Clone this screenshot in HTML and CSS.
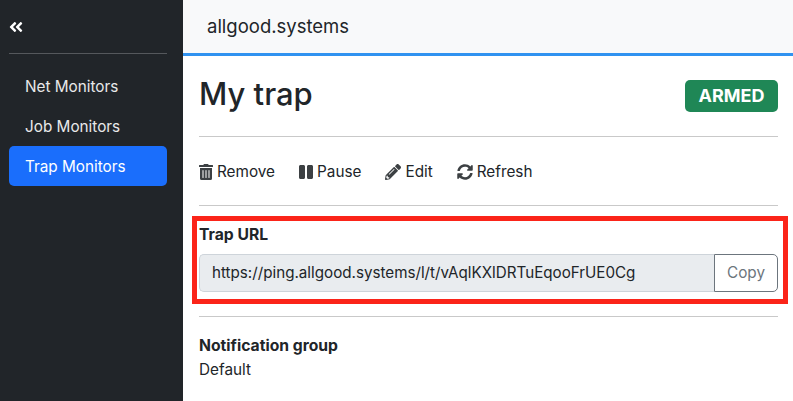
FILE: index.html
```html
<!DOCTYPE html>
<html lang="en">
<head>
  <meta charset="UTF-8" />
  <meta name="viewport" content="width=device-width, initial-scale=1.0"/>
  <title>My trap</title>
  <link rel="stylesheet" href="styles.css">
</head>
<body>
  <div class="app">
    <aside class="sidebar">
      <div class="sidebar-top">
        <svg class="collapse-icon" viewBox="0 0 448 512"><path d="M223.7 239l136-136c9.4-9.4 24.6-9.4 33.9 0l22.6 22.6c9.4 9.4 9.4 24.6 0 33.9L319.9 256l96.4 96.4c9.4 9.4 9.4 24.6 0 33.9L393.7 409c-9.4 9.4-24.6 9.4-33.9 0l-136-136c-9.5-9.4-9.5-24.6-.1-34zm-192 34l136 136c9.4 9.4 24.6 9.4 33.9 0l22.6-22.6c9.4-9.4 9.4-24.6 0-33.9L127.9 256l96.4-96.4c9.4-9.4 9.4-24.6 0-33.9L201.7 103c-9.4-9.4-24.6-9.4-33.9 0l-136 136c-9.5 9.4-9.5 24.6-.1 34z"/></svg>
      </div>
      <nav class="side-nav">
        <a class="nav-item">Net Monitors</a>
        <a class="nav-item">Job Monitors</a>
        <a class="nav-item active">Trap Monitors</a>
      </nav>
    </aside>

    <div class="main">
      <header class="topbar">allgood.systems</header>
      <div class="content">
        <div class="title-row">
          <h1>My trap</h1>
          <span class="badge">ARMED</span>
        </div>

        <div class="actions">
          <a class="action">
            <svg class="icon icon-narrow" viewBox="0 0 448 512"><path d="M32 464a48 48 0 0 0 48 48h288a48 48 0 0 0 48-48V128H32zm272-256a16 16 0 0 1 32 0v224a16 16 0 0 1-32 0zm-96 0a16 16 0 0 1 32 0v224a16 16 0 0 1-32 0zm-96 0a16 16 0 0 1 32 0v224a16 16 0 0 1-32 0zM432 32H312l-9.4-18.7A24 24 0 0 0 281.1 0H166.8a23.72 23.72 0 0 0-21.4 13.3L136 32H16A16 16 0 0 0 0 48v32a16 16 0 0 0 16 16h416a16 16 0 0 0 16-16V48a16 16 0 0 0-16-16z"/></svg>
            Remove
          </a>
          <a class="action">
            <svg class="icon icon-narrow" viewBox="0 0 448 512"><path d="M144 479H48c-26.5 0-48-21.5-48-48V79c0-26.5 21.5-48 48-48h96c26.5 0 48 21.5 48 48v352c0 26.5-21.5 48-48 48zm304-48V79c0-26.5-21.5-48-48-48h-96c-26.5 0-48 21.5-48 48v352c0 26.5 21.5 48 48 48h96c26.5 0 48-21.5 48-48z"/></svg>
            Pause
          </a>
          <a class="action">
            <svg class="icon" viewBox="0 0 512 512"><path d="M497.9 142.1l-46.1 46.1c-4.7 4.7-12.3 4.7-17 0l-111-111c-4.7-4.7-4.7-12.3 0-17l46.1-46.1c18.7-18.7 49.1-18.7 67.9 0l60.1 60.1c18.8 18.7 18.8 49.1 0 67.9zM284.2 99.8L21.6 362.4.4 483.9c-2.9 16.4 11.4 30.6 27.8 27.8l121.5-21.3 262.6-262.6c4.7-4.7 4.7-12.3 0-17l-111-111c-4.8-4.7-12.4-4.7-17.1 0zM124.1 339.9c-5.5-5.5-5.5-14.3 0-19.8l154-154c5.5-5.5 14.3-5.5 19.8 0s5.5 14.3 0 19.8l-154 154c-5.5 5.5-14.3 5.5-19.8 0zM88 424h48v36.3l-64.5 11.3-31.1-31.1L51.7 376H88v48z"/></svg>
            Edit
          </a>
          <a class="action">
            <svg class="icon" viewBox="0 0 512 512"><path d="M370.72 133.28C339.458 104.008 298.888 87.962 255.848 88c-77.458.068-144.328 53.178-162.791 126.85-1.344 5.363-6.122 9.15-11.651 9.15H24.103c-7.498 0-13.194-6.807-11.807-14.176C33.933 94.924 134.813 8 256 8c66.448 0 126.791 26.136 171.315 68.685L463.03 40.97C478.149 25.851 504 36.559 504 57.941V192c0 13.255-10.745 24-24 24H345.941c-21.382 0-32.09-25.851-16.971-40.971l41.75-41.749zM32 296h134.059c21.382 0 32.09 25.851 16.971 40.971l-41.75 41.75c31.262 29.273 71.835 45.319 114.876 45.28 77.418-.07 144.315-53.144 162.787-126.849 1.344-5.363 6.122-9.15 11.651-9.15h57.304c7.498 0 13.194 6.807 11.807 14.176C478.067 417.076 377.187 504 256 504c-66.448 0-126.791-26.136-171.315-68.685L48.97 471.03C33.851 486.149 8 475.441 8 454.059V320c0-13.255 10.745-24 24-24z"/></svg>
            Refresh
          </a>
        </div>

        <div class="field trap-field">
          <div class="field-label">Trap URL</div>
          <div class="input-group">
            <div class="url-value">https://ping.allgood.systems/l/t/vAqlKXlDRTuEqooFrUE0Cg</div>
            <button class="copy-btn">Copy</button>
          </div>
          <!-- annotation drawn over the screenshot -->
          <div class="highlight"></div>
        </div>

        <div class="field">
          <div class="field-label">Notification group</div>
          <div>Default</div>
        </div>
      </div>
    </div>
  </div>
</body>
</html>
```

FILE: styles.css
```css
html, body {
  margin: 0;
  height: 100%;
  overflow: hidden;
}

body {
  font-family: Inter, "Liberation Sans", sans-serif;
  font-size: 15.3px;
  line-height: 24px;
  color: #212529;
  background: #fff;
}

.app {
  display: flex;
  height: 401px;
}

/* sidebar */
.sidebar {
  width: 183px;
  flex: none;
  box-sizing: border-box;
  padding: 0 16px 0 9px;
  background: #212529;
}

.sidebar-top {
  height: 54px;
  box-sizing: border-box;
  display: flex;
  align-items: center;
  border-bottom: 1px solid #55585c;
}

.collapse-icon {
  width: 14px;
  height: 16px;
  fill: #fff;
}

.side-nav {
  display: flex;
  flex-direction: column;
  margin-top: 12px;
}

.nav-item {
  height: 40px;
  box-sizing: border-box;
  display: flex;
  align-items: center;
  padding: 2px 0 0 16px;
  color: #e9e9ea;
  border-radius: 5px;
}

.nav-item.active {
  background: #1a6efc;
  color: #fff;
}

/* main column */
.main {
  flex: 1;
  min-width: 0;
}

.topbar {
  height: 53px;
  box-sizing: border-box;
  display: flex;
  align-items: center;
  padding: 0 0 1px 24px;
  font-size: 18.5px;
  background: #f8f9fa;
}

.content {
  padding: 0 15px 0 16px;
  border-top: 3px solid #3092f0;
}

.title-row {
  height: 80px;
  display: flex;
  align-items: center;
  justify-content: space-between;
  border-bottom: 1px solid #c9c9c9;
}

h1 {
  margin: 0 0 4px;
  font-size: 31px;
  font-weight: 500;
  line-height: 38px;
}

.badge {
  width: 93px;
  height: 32px;
  display: flex;
  align-items: center;
  justify-content: center;
  font-size: 18px;
  font-weight: 700;
  color: #fff;
  background: #1f8756;
  border-radius: 5px;
}

.actions {
  height: 69px;
  box-sizing: border-box;
  padding-top: 2px;
  display: flex;
  align-items: center;
  gap: 24px;
  border-bottom: 1px solid #c9c9c9;
}

.action {
  display: flex;
  align-items: center;
  gap: 4px;
}

.icon {
  height: 16px;
  width: 16px;
  fill: #3c4043;
}

.icon-narrow {
  width: 14px;
}

.field {
  padding-top: 17px;
}

.field-label {
  font-size: 15.7px;
  font-weight: 700;
}

.trap-field {
  position: relative;
  height: 93px;
  border-bottom: 1px solid #c9c9c9;
}

.input-group {
  display: flex;
  height: 38px;
  margin-top: 7px;
}

.url-value {
  flex: 1;
  display: flex;
  align-items: center;
  padding-left: 12px;
  font-size: 15.2px;
  background: #e9ecef;
  border: 1px solid #ced4da;
  border-right: 0;
  border-radius: 5px 0 0 5px;
}

.copy-btn {
  width: 64px;
  padding: 0;
  font: inherit;
  color: #6c757d;
  background: #fff;
  border: 1px solid #6c757d;
  border-radius: 0 5px 5px 0;
}

.highlight {
  position: absolute;
  left: -7px;
  right: -10px;
  top: 10px;
  height: 88px;
  box-sizing: border-box;
  border: 5px solid #fb2419;
  pointer-events: none;
}
```
